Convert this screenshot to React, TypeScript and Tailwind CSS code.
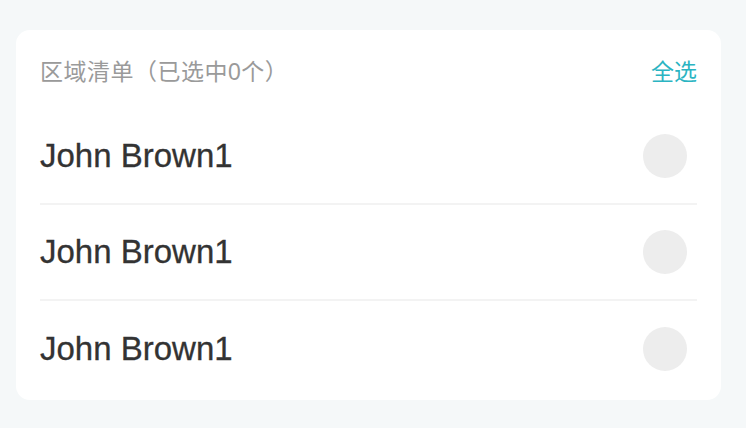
import React from "react";

const font = { fontFamily: '"Liberation Sans", "Noto Sans CJK SC", sans-serif' };

export default function App() {
  const rows = ["John Brown1", "John Brown1", "John Brown1"];
  return (
    <div className="w-[746px] h-[428px] bg-[#f5f8f9] pt-[30px] pl-4" style={font}>
      <div className="w-[705px] h-[370px] bg-white rounded-[14px] px-6 flex flex-col">
        <div className="h-[79px] pt-[6px] flex items-center justify-between">
          <span className="text-[23px] text-[#9a9a9a] tracking-[0.5px]">区域清单（已选中0个）</span>
          <span className="text-[23px] text-[#2bb4c2]">全选</span>
        </div>
        {rows.map((r, i) => (
          <div
            key={i}
            className={
              "h-[96px] flex items-center justify-between pr-[10px] " +
              (i < rows.length - 1 ? "border-b-2 border-[#f3f3f3]" : "")
            }
          >
            <span className="text-[33px] text-[#333333] [-webkit-text-stroke:0.3px_#333333]">{r}</span>
            <span className="w-[44px] h-[44px] rounded-full bg-[#ededed]" />
          </div>
        ))}
      </div>
    </div>
  );
}
